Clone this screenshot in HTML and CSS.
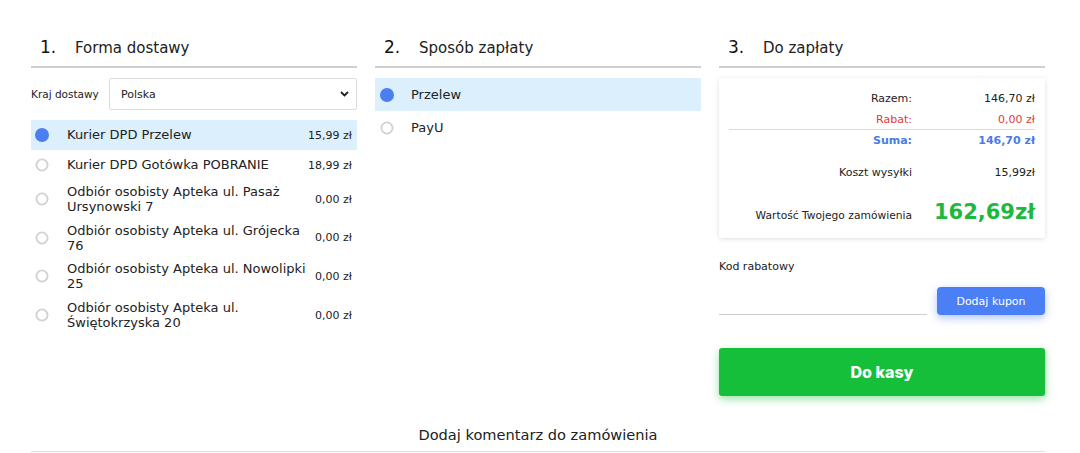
FILE: index.html
```html
<!DOCTYPE html>
<html lang="pl">
<head>
<meta charset="utf-8">
<link rel="stylesheet" href="styles.css">
</head>
<body>
<div class="page">
  <div class="cols">
    <section class="col">
      <h2 class="heading"><span class="num">1.</span>Forma dostawy</h2>
      <div class="country">
        <span class="country-label">Kraj dostawy</span>
        <div class="select">
          <span>Polska</span>
          <svg class="chev" width="9" height="6" viewBox="0 0 9 6"><polyline points="1,1 4.5,4.5 8,1" fill="none" stroke="#222" stroke-width="1.8"/></svg>
        </div>
      </div>
      <ul class="options">
        <li class="opt active"><span class="radio"></span><span class="opt-label">Kurier DPD Przelew</span><span class="price">15,99 zł</span></li>
        <li class="opt"><span class="radio"></span><span class="opt-label">Kurier DPD Gotówka POBRANIE</span><span class="price">18,99 zł</span></li>
        <li class="opt"><span class="radio"></span><span class="opt-label">Odbiór osobisty Apteka ul. Pasaż Ursynowski 7</span><span class="price">0,00 zł</span></li>
        <li class="opt"><span class="radio"></span><span class="opt-label">Odbiór osobisty Apteka ul. Grójecka 76</span><span class="price">0,00 zł</span></li>
        <li class="opt"><span class="radio"></span><span class="opt-label">Odbiór osobisty Apteka ul. Nowolipki 25</span><span class="price">0,00 zł</span></li>
        <li class="opt"><span class="radio"></span><span class="opt-label">Odbiór osobisty Apteka ul. Świętokrzyska 20</span><span class="price">0,00 zł</span></li>
      </ul>
    </section>

    <section class="col">
      <h2 class="heading"><span class="num">2.</span>Sposób zapłaty</h2>
      <ul class="pay">
        <li class="pay-opt active"><span class="radio"></span><span>Przelew</span></li>
        <li class="pay-opt"><span class="radio"></span><span>PayU</span></li>
      </ul>
    </section>

    <section class="col">
      <h2 class="heading"><span class="num">3.</span>Do zapłaty</h2>
      <div class="summary">
        <div class="sum-row"><span>Razem:</span><span>146,70 zł</span></div>
        <div class="sum-row red"><span>Rabat:</span><span>0,00 zł</span></div>
        <div class="sum-row blue"><span>Suma:</span><span>146,70 zł</span></div>
        <div class="sum-row ship"><span>Koszt wysyłki</span><span>15,99zł</span></div>
        <div class="sum-row total"><span>Wartość Twojego zamówienia</span><span class="big">162,69zł</span></div>
      </div>
      <div class="coupon-label">Kod rabatowy</div>
      <div class="coupon">
        <div class="coupon-input"></div>
        <button class="coupon-btn">Dodaj kupon</button>
      </div>
      <button class="checkout">Do kasy</button>
    </section>
  </div>
  <div class="comment">Dodaj komentarz do zamówienia</div>
</div>
</body>
</html>
```

FILE: styles.css
```css
* { box-sizing: border-box; }
html, body { margin: 0; padding: 0; background: #fff; }
body {
  font-family: "DejaVu Sans", Verdana, sans-serif;
  color: #222;
}
.page {
  width: 1014px;
  margin-left: 31px;
}
.cols {
  display: grid;
  grid-template-columns: 326px 326px 326px;
  column-gap: 18px;
}
.col { display: flex; flex-direction: column; }
.heading {
  margin: 37px 0 0;
  padding: 0 0 8px 9px;
  font-weight: normal;
  font-size: 15px;
  line-height: 20px;
  color: #222;
  border-bottom: 2px solid #cfcfcf;
}
.num {
  display: inline-block;
  width: 35px;
  font-size: 17px;
  color: #111;
}
.country {
  display: flex;
  align-items: center;
  margin-top: 10px;
}
.country-label {
  font-size: 10.5px;
  width: 78px;
}
.select {
  flex: 1;
  height: 32px;
  border: 1px solid #dcdcdc;
  border-radius: 2px;
  display: flex;
  align-items: center;
  justify-content: space-between;
  padding: 0 7px 0 11px;
  font-size: 11px;
}
.options, .pay {
  list-style: none;
  margin: 10px 0 0;
  padding: 0;
}
.opt {
  display: flex;
  align-items: center;
  min-height: 30px;
  padding: 4px 5px 4px 4px;
}
.opt.active, .pay-opt.active { background: #dbeffc; }
.radio {
  flex: none;
  width: 14px;
  height: 14px;
  border-radius: 50%;
  border: 2px solid #d2d2d2;
  transform: scale(0.93);
}
.active .radio {
  background: #4b7ef0;
  border-color: #4b7ef0;
  transform: none;
}
.opt-label {
  flex: 1;
  margin-left: 18px;
  font-size: 13px;
  line-height: 15.3px;
  padding-right: 8px;
}
.price {
  flex: none;
  font-size: 11px;
}
.pay-opt {
  display: flex;
  align-items: center;
  height: 33px;
  padding-left: 5px;
  font-size: 13px;
}
.pay-opt .radio { margin-right: 17px; }
.summary {
  margin-top: 10px;
  height: 160px;
  padding: 10px 10px 0;
  box-shadow: 0 1px 5px rgba(0,0,0,0.13);
  border-radius: 2px;
  font-size: 11px;
}
.sum-row {
  display: grid;
  grid-template-columns: 1fr 123px;
  align-items: baseline;
  height: 21px;
  line-height: 21px;
}
.sum-row > span { text-align: right; }
.red { color: #e03a3a; border-bottom: 1px solid #dcdcdc; }
.blue { color: #4a7ce8; font-weight: bold; }
.ship { margin-top: 11px; }
.total { margin-top: 12px; height: 34px; line-height: 34px; }
.total > span:first-child { font-size: 10.7px; }
.big {
  font-size: 21px;
  font-weight: bold;
  color: #1eb83f;
}
.coupon-label {
  margin-top: 22px;
  font-size: 11px;
  line-height: 14px;
}
.coupon {
  margin-top: 13px;
  display: flex;
  align-items: flex-end;
  gap: 10px;
}
.coupon-input {
  flex: 1;
  height: 28px;
  border-bottom: 1px solid #cfcfcf;
}
.coupon-btn {
  width: 108px;
  height: 28px;
  border: none;
  border-radius: 4px;
  background: #4b7ff6;
  color: #fff;
  font-family: "DejaVu Sans", Verdana, sans-serif;
  font-size: 11px;
  box-shadow: 0 3px 8px rgba(75,127,246,0.45);
}
.checkout {
  margin-top: 33px;
  height: 48px;
  border: none;
  border-radius: 3px;
  background: #15bf3a;
  color: #fff;
  font-family: Inter, "DejaVu Sans", sans-serif;
  font-weight: 800;
  font-size: 16px;
  box-shadow: 0 3px 9px rgba(21,191,58,0.45);
}
.comment {
  margin-top: 29px;
  padding-bottom: 6px;
  text-align: center;
  font-size: 14.6px;
  line-height: 20px;
  border-bottom: 1px solid #dcdcdc;
}
```
